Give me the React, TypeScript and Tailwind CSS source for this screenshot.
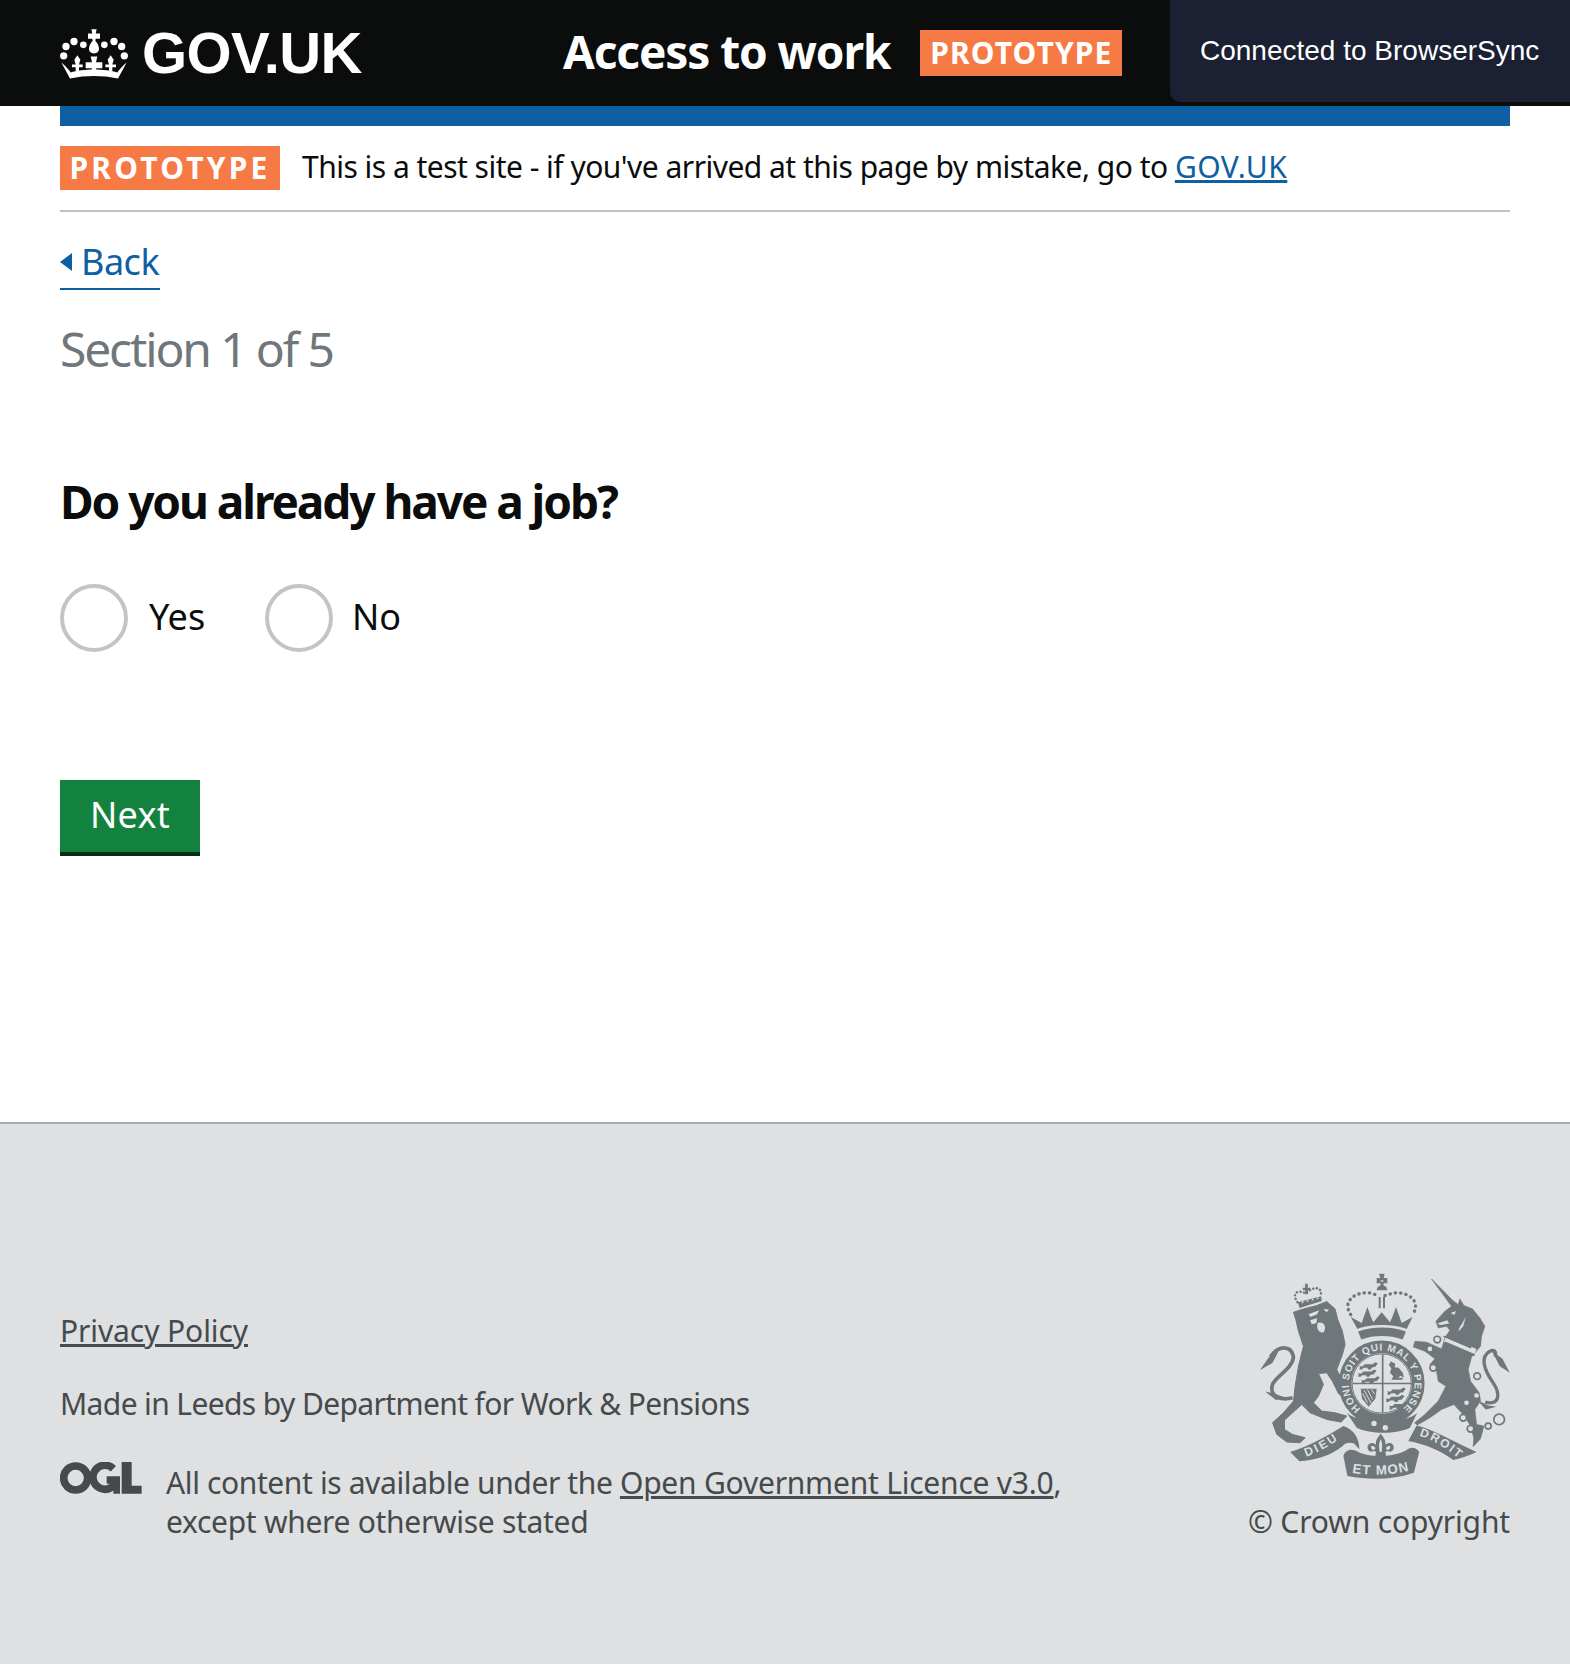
const body = { fontFamily: '"Noto Sans", "Open Sans", sans-serif' };

function CrownLogo() {
  const fleur = "l9 14l-4 14h11v8h-11v14h-10v-14h-11v-8h11l-4-14z";
  return (
    <svg width="68" height="51" viewBox="18 15 204 152" fill="#fff" aria-hidden="true">
      <path d="M112 18h16l-3 13h13v16h-13l-1 6c7 8 11 16 11 24c0 8-6 14-15 14s-15-6-15-14c0-8 4-16 11-24l-1-6h-13V31h13z" />
      {[[88, 65, 10], [151, 65, 10], [60, 55, 11], [180, 55, 11], [36, 70, 11], [203, 70, 11], [29, 98, 11], [211, 98, 11]].map(([x, y, r], i) => (
        <circle key={i} cx={x} cy={y} r={r} />
      ))}
      <path d={`M70 96${fleur}`} />
      <path d={`M170 96${fleur}`} />
      <path d="M110 100h20l-4 17h19v18h-19l4 16h-20l4-16H95v-18h19z" />
      <path d="M22 118C36 130 44 140 50 148C85 136 155 136 190 148C196 140 204 130 218 118L192 166C145 156 95 156 48 166Z" />
    </svg>
  );
}

function OglLogo() {
  return (
    <svg width="82" height="32" viewBox="30 35 246 96" fill="#454a4c" aria-hidden="true">
      <circle cx="77" cy="83" r="36" fill="none" stroke="#454a4c" strokeWidth="23" />
      <path d="M190 55A36 36 0 1 0 199 92" fill="none" stroke="#454a4c" strokeWidth="23" />
      <path d="M170 78h40v52h-20v-30h-20zM215 35h30v71h30v24h-60z" />
    </svg>
  );
}

function Crest() {
  const c = "#6f777b";
  const bg = "#dee0e2";
  const txt = { fontFamily: '"Liberation Sans", sans-serif', fontWeight: 700 };
  const ring = [[622, 240, 10], [610, 325, 10], [742, 350, 10], [700, 475, 10], [722, 508, 10], [775, 500, 9], [808, 480, 16]];
  const hole = [[710, 430, 7], [740, 408, 7], [600, 268, 7]];
  const beast = "M0 8h12l6-6h24l8-6l8 4l-6 6l-2 4l-10 2l-4 6h-8l-2-5h-12l-4 5h-8l2-7z";
  return (
    <svg width="250" height="203" viewBox="90 40 750 610" className="overflow-visible" aria-hidden="true">
      <defs>
        <path id="garter" d="M391.400 447.800A99 99 0 1 1 518.600 447.800" />
        <path id="ribLeft" d="M228 592C265 578 300 560 332 535" />
        <path id="ribMid" d="M366 640C420 650 490 648 545 632" />
        <path id="ribRight" d="M568 530C610 540 645 565 695 604" />
      </defs>

      {/* lion */}
      <g transform="translate(75 30)">
        <path fill={c} stroke={c} strokeWidth="3" strokeLinejoin="round" d="M115 128L145 118L185 108L215 96L240 118L248 150L262 185L270 225L262 255L245 300L262 335L288 365L272 392L250 372L232 335L215 310L190 312L205 345L190 380L175 400L200 425L240 430L275 440L258 458L215 450L165 430L140 405L118 425L88 452L88 480L112 495L150 505L135 520L95 518L65 495L52 460L85 430L115 395L120 350L130 290L145 230L130 185L122 150Z" />
        <path fill={bg} d="M160 134L192 122L186 134L166 142Z M205 118L222 120L214 128Z M188 160C206 155 216 172 206 188C192 192 182 176 188 160Z M165 152L186 146L184 160L170 164Z" />
        <path fill="none" stroke={c} strokeWidth="11" d="M112 385C72 395 42 378 52 345C62 320 112 298 115 262C108 226 70 226 46 262" />
        <path fill={c} d="M14 302L42 262L70 246L52 280L34 290Z M30 366L56 372L92 385L62 392Z" />
        <path fill={c} d="M128 98L198 80L200 94L133 115Z M143 54h7v-12h8v12h8v8h-8v12h-8v-12h-7z" />
        <path fill="none" stroke={c} strokeWidth="7" strokeDasharray="1 10" strokeLinecap="round" d="M127 98C108 70 128 58 152 72C172 50 205 48 196 80" />
        <path fill={bg} d="M140 96l5-1v5l-5 1zM155 92l5-1v5l-5 1zM170 88l5-1v5l-5 1zM185 84l5-1v5l-5 1z" />
      </g>

      {/* unicorn */}
      <g transform="translate(450 30)">
        <path fill={c} stroke={c} strokeWidth="2" strokeLinejoin="round" d="M155 28L218 92L235 105L240 88L252 108L278 118L300 145L315 170L305 200L302 230L275 262L265 300L272 335L298 370L302 395L285 420L290 465L312 470L302 508L280 532L282 505L270 465L245 430L222 405L185 420L150 445L112 467L104 460L135 435L175 395L198 350L175 335L170 305L150 285L165 268L135 245L100 232L105 215L140 218L185 238L195 205L210 182L200 170L175 175L168 155L195 125L215 110Z" />
        <path fill={bg} d="M212 130L228 124L224 136ZM172 162L202 152L208 162L182 166ZM238 175C248 160 254 150 258 140L250 170L236 186Z" />
        <path fill={bg} d="M198 200L290 238L282 258L192 218Z" />
        <path fill={c} d="M200 198l7 3v-6l6 2v7l8 3v-6l6 2v7l8 3v-6l6 2v7l8 3v-6l6 2v7l8 3v-6l6 2v7l6 3l-2 6l-85-36z" />
        <path fill={c} d="M196 216l90 38l-4 6l-88-38z" />
        <path fill="none" stroke={c} strokeWidth="10" d="M316 398C360 410 362 372 340 340C312 300 300 262 330 245C348 238 350 252 345 262" />
        <path fill={c} d="M390 310L368 268L335 242L360 290L375 300Z M292 392L325 408L350 412L318 420Z" />
      </g>
      {ring.map(([x, y, r], i) => (
        <circle key={i} cx={x} cy={y} r={r} fill={bg} stroke={c} strokeWidth="5" />
      ))}
      {hole.map(([x, y, r], i) => (
        <circle key={i} cx={x} cy={y} r={r} fill={bg} />
      ))}

      {/* royal crown */}
      <path fill={c} d="M447 42h17l-3 13h11v16h-11l-1 6c7 2 12 7 12 15h-32c0-8 5-13 12-15l-1-6h-11V55h11z" />
      <path fill={c} d="M446 112h6v34h-6zM459 112h6v34h-6z" />
      <path fill={bg} d="M452 62h8v4h-8z" />
      <path fill={c} d="M362 172L395 190L402 170L412 142L422 170L430 188L455 158L480 188L488 170L498 142L508 170L515 190L548 172L530 208C490 192 420 192 382 208Z" />
      <path fill={c} d="M384 216C428 200 484 200 528 216L518 240C480 226 430 226 394 240Z" />
      <path fill="none" stroke={c} strokeWidth="10" strokeDasharray="1 15" strokeLinecap="round" d="M362 165C335 125 375 95 420 100L446 108M465 108L490 100C535 95 575 125 548 165" />

      {/* shield and garter */}
      <circle cx="455" cy="372" r="110" fill="none" stroke={c} strokeWidth="38" />
      <text style={txt} fontSize="30" fill={bg}>
        <textPath href="#garter" textLength="482" lengthAdjust="spacing">HONI SOIT QUI MAL Y PENSE</textPath>
      </text>
      <circle cx="455" cy="372" r="89" fill={bg} stroke={c} strokeWidth="3" />
      <path stroke={c} strokeWidth="5" d="M458 284V460M367 372H545" />
      {[[386, 312], [382, 334], [392, 354], [470, 388], [466, 410], [476, 432]].map(([x, y], i) => (
        <path key={i} fill={c} transform={`translate(${x} ${y})`} d={beast} />
      ))}
      <path fill={c} d="M482 305l14 8l-2 10l12 2l12 14l4 16l-10-6l-8 6h14v6h-34l6-10l-10-12l4-12l-8-12l4-4z" />
      <path fill={c} d="M392 388h48l-4 30l-20 24l-20-24z" />
      <path fill="none" stroke={bg} strokeWidth="3" d="M402 392l22 40M412 390l16 30M424 390l10 14M398 402l14 28" />
      <path fill={c} d="M350 460C380 490 520 500 562 460L540 505C500 525 420 525 380 505Z" />
      <circle cx="432" cy="492" r="8" fill={bg} />
      <circle cx="466" cy="505" r="8" fill={bg} />

      {/* fleur */}
      <path fill={c} d="M452 522c8 12 16 18 14 34c14-12 30 0 24 14c-4 8-12 8-18 4l-6 4l4 22h-8l-10-2l-10 2h-8l4-22l-6-4c-6 4-14 4-18-4c-6-14 10-26 24-14c-2-16 6-22 14-34z" />
      <path fill={bg} d="M452 540c5 8 6 18 3 38h-6c-3-20-2-30 3-38zM424 560c6-2 12 2 12 8l-6 4c-5 0-8-8-6-12zM480 560c-6-2-12 2-12 8l6 4c5 0 8-8 6-12z" />

      {/* scroll */}
      <path fill={c} d="M180 578C240 560 290 530 340 500C370 510 388 535 388 570L372 552C355 548 345 552 338 560C300 590 255 602 208 606Z" />
      <path fill={c} d="M340 590C345 570 365 565 385 578C420 595 490 595 530 572C545 560 560 565 568 578L552 640C490 662 420 662 352 650Z" />
      <path fill={c} d="M535 545L560 498C610 510 670 545 740 578C715 590 690 598 670 602C630 572 585 555 535 545Z" />
      <text style={txt} fontSize="36" letterSpacing="7" fill={bg}>
        <textPath href="#ribLeft">DIEU</textPath>
      </text>
      <text style={txt} fontSize="40" fill={bg}>
        <textPath href="#ribMid" textLength="172" lengthAdjust="spacing">ET MON</textPath>
      </text>
      <text style={txt} fontSize="36" letterSpacing="6" fill={bg}>
        <textPath href="#ribRight">DROIT</textPath>
      </text>
    </svg>
  );
}

function Radio({ label, w, gap }: { label: string; w: string; gap: string }) {
  return (
    <label className={`flex items-center ${w}`}>
      <span className="h-[68px] w-[68px] rounded-full border-4 border-[#c4c4c4] bg-white" />
      <span className={`${gap} pb-[2px] text-[36px] leading-[40px] text-[#0b0c0c]`}>{label}</span>
    </label>
  );
}

export default function App() {
  return (
    <div style={body} className="relative min-h-[1664px] bg-white flex flex-col">
      <header className="h-[106px] bg-[#0b0c0c] pl-[60px] flex items-center text-white">
        <div className="flex items-center w-[503px]">
          <CrownLogo />
          <span style={{ fontFamily: '"Liberation Sans", sans-serif' }} className="ml-[14px] text-[58px] leading-none font-bold tracking-[-0.6px]">GOV.UK</span>
        </div>
        <span className="pb-[4px] text-[46px] leading-none font-bold tracking-[-1.1px]">Access to work</span>
        <span className="ml-[30px] bg-[#f67a45] h-[46px] w-[202px] pb-[2px] flex items-center justify-center text-[30px] font-bold tracking-[1.1px]">PROTOTYPE</span>
      </header>
      <div style={{ fontFamily: '"Liberation Sans", sans-serif' }} className="absolute top-0 right-0 h-[102px] w-[400px] bg-[#1b2032] rounded-bl-[10px] pl-[30px] text-white text-[28px] flex items-center">
        Connected to BrowserSync
      </div>

      <main className="px-[60px] flex-1">
        <div className="h-[20px] bg-[#0f60a3]" />
        <div className="flex items-center h-[86px] border-b-2 border-[#bfc1c3]">
          <strong className="bg-[#f67a45] text-white h-[44px] w-[220px] pb-[2px] flex items-center justify-center text-[30px] font-bold tracking-[3.2px]">PROTOTYPE</strong>
          <p className="ml-[22px] pb-[2px] text-[30px] leading-[40px] text-[#0b0c0c] tracking-[-0.52px]">
            This is a test site - if you've arrived at this page by mistake, go to{" "}
            <a className="text-[#0f60a3] underline tracking-[0.5px]">GOV.UK</a>
          </p>
        </div>
        <a className="mt-[30px] pb-[6px] flex items-center w-[100px] h-[48px] border-b-2 border-[#0f60a3] text-[#0f60a3]">
          <span className="w-0 h-0 border-y-[9px] border-y-transparent border-r-[12px] border-r-[#0f60a3]" />
          <span className="ml-[9px] text-[36px] leading-[40px] tracking-[-0.5px]">Back</span>
        </a>
        <p className="mt-[29px] text-[48px] leading-[60px] text-[#6f777b] tracking-[-2.15px]">Section 1 of 5</p>
        <h1 className="mt-[92px] text-[46px] leading-[60px] font-bold text-[#0b0c0c] tracking-[-2.07px]">Do you already have a job?</h1>
        <div className="mt-[53px] flex">
          <Radio label="Yes" w="w-[205px]" gap="ml-[21px]" />
          <Radio label="No" w="" gap="ml-[19px]" />
        </div>
        <button className="mt-[128px] block h-[76px] w-[140px] pb-[2px] bg-[#13823f] border-b-4 border-[#062f14] text-white text-[36px] leading-[40px] tracking-[0.3px]">Next</button>
      </main>

      <footer className="h-[542px] bg-[#dee0e2] border-t-2 border-[#a1acb2] px-[60px] flex justify-between items-start text-[#454a4c]">
        <div className="pt-[187px]">
          <a className="block text-[30px] leading-[40px] underline tracking-[-0.1px]">Privacy Policy</a>
          <p className="mt-[33px] text-[30px] leading-[40px] tracking-[-0.62px]">Made in Leeds by Department for Work &amp; Pensions</p>
          <div className="mt-[39px] flex items-start">
            <div className="mt-[-1px]"><OglLogo /></div>
            <p className="ml-[24px] text-[30px] leading-[39px] tracking-[-0.38px]">
              All content is available under the <a className="underline tracking-[-0.22px]">Open Government Licence v3.0</a>,<br />
              <span className="tracking-[-0.3px]">except where otherwise stated</span>
            </p>
          </div>
        </div>
        <div className="pt-[149px] flex flex-col items-end">
          <Crest />
          <p className="mt-[26px] text-[30px] leading-[40px] tracking-[-0.15px]">© Crown copyright</p>
        </div>
      </footer>
    </div>
  );
}
